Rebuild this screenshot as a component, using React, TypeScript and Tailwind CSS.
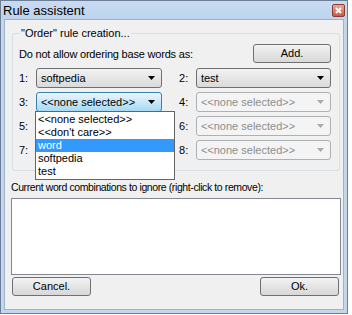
import React from 'react';

const font = { fontFamily: '"Liberation Sans", Arial, sans-serif' };

const Arrow = ({ disabled }: { disabled?: boolean }) => (
  <svg width="7" height="4" viewBox="0 0 7 4" className="shrink-0">
    <path d="M0 0h7L3.5 4z" fill={disabled ? '#a9a9a9' : '#000'} />
  </svg>
);

type ComboProps = { value: string; width: string; state?: 'normal' | 'focus' | 'disabled' };

const Combo: React.FC<ComboProps> = ({ value, width, state = 'normal' }) => {
  const look =
    state === 'focus'
      ? 'border-[#3c7fb1] bg-gradient-to-b from-[#eaf6fd] to-[#a7d9f5]'
      : state === 'disabled'
      ? 'border-[#adb2b5] bg-[#f4f4f4] text-[#8d8d8d]'
      : 'border-[#707070] bg-gradient-to-b from-[#f2f2f2] to-[#dadada]';
  return (
    <div className={`${width} h-[20px] border rounded-[3px] flex items-center pl-[4px] pr-[6px] ${look}`}>
      <span className="flex-1 truncate leading-none">{value}</span>
      <Arrow disabled={state === 'disabled'} />
    </div>
  );
};

const Button = ({ label, className = '' }: { label: string; className?: string }) => (
  <div className={`h-[19px] border border-[#707070] rounded-[3px] bg-gradient-to-b from-[#f2f2f2] to-[#d8d8d8] flex items-center justify-center ${className}`}>
    {label}
  </div>
);

export default function App() {
  // combos 5 and 7 sit under the open list, so their text is not shown
  const rows: [string, ComboProps, string, ComboProps][] = [
    ['1:', { value: 'softpedia', width: 'w-[127px]' }, '2:', { value: 'test', width: 'w-[136px]' }],
    ['3:', { value: '<<none selected>>', width: 'w-[127px]', state: 'focus' }, '4:', { value: '<<none selected>>', width: 'w-[136px]', state: 'disabled' }],
    ['5:', { value: '', width: 'w-[127px]', state: 'disabled' }, '6:', { value: '<<none selected>>', width: 'w-[136px]', state: 'disabled' }],
    ['7:', { value: '', width: 'w-[127px]', state: 'disabled' }, '8:', { value: '<<none selected>>', width: 'w-[136px]', state: 'disabled' }],
  ];
  const options = ['<<none selected>>', "<<don't care>>", 'word', 'softpedia', 'test'];

  return (
    <div className="w-[352px] h-[315px] bg-white flex text-[11px] text-black overflow-hidden" style={font}>
      <div className="w-[348px] h-[314px] bg-[#c2d6ee] border border-[#6d7f96] flex flex-col">
        {/* title bar */}
        <div className="h-[18px] flex items-center justify-between pl-[2px] pr-[2px] bg-gradient-to-b from-[#c8dbf2] to-[#bed3ed]">
          <span className="text-[13px] leading-none">Rule assistent</span>
          <div className="w-[13px] h-[13px] rounded-[2px] border border-[#8b3b2f] bg-gradient-to-b from-[#e9a99a] to-[#c75a45] flex items-center justify-center">
            <svg width="7" height="7" viewBox="0 0 7 7">
              <path d="M1 1l5 5M6 1L1 6" stroke="#fff" strokeWidth="2" />
            </svg>
          </div>
        </div>

        {/* client */}
        <div className="flex-1 mx-[3px] mb-[3px] bg-[#f0f0f0] border border-[#9fb2c9] flex flex-col pl-[7px] pr-[4px] pt-[13px]">
          {/* group box */}
          <div className="relative w-[328px] h-[138px] border border-[#d5dfe5] rounded-[3px] pl-[6px] pr-[8px] pt-[10px]">
            <span className="absolute left-[7px] top-[-8px] bg-[#f0f0f0] px-[1px] leading-[14px]">"Order" rule creation...</span>
            <div className="flex items-center justify-between">
              <span className="pt-[1px] tracking-[-0.2px]">Do not allow ordering base words as:</span>
              <Button label="Add." className="w-[78px] h-[18px]" />
            </div>
            <div className="flex flex-col gap-[4px] mt-[5px]">
              {rows.map(([l1, c1, l2, c2]) => (
                <div key={l1} className="flex items-center">
                  <span className="w-[17px]">{l1}</span>
                  <Combo {...c1} />
                  <span className="w-[17px] ml-[17px]">{l2}</span>
                  <Combo {...c2} />
                </div>
              ))}
            </div>
            {/* open dropdown list */}
            <div className="absolute left-[22px] top-[77px] w-[140px] bg-white border border-[#646464] flex flex-col py-[1px]">
              {options.map((o) => (
                <div key={o} className={`h-[13px] leading-[13px] pl-[2px] ${o === 'word' ? 'bg-[#3399ff] text-white' : ''}`}>
                  {o}
                </div>
              ))}
            </div>
          </div>

          <div className="mt-[9px] -ml-[1px] text-[10.5px] tracking-[-0.4px]">Current word combinations to ignore (right-click to remove):</div>
          <div className="-ml-[1px] mt-[2px] w-[330px] h-[77px] bg-white border border-[#828790]" />

          <div className="flex justify-between mt-[2px] w-[327px]">
            <Button label="Cancel." className="w-[79px]" />
            <Button label="Ok." className="w-[79px]" />
          </div>
        </div>
      </div>
    </div>
  );
}
